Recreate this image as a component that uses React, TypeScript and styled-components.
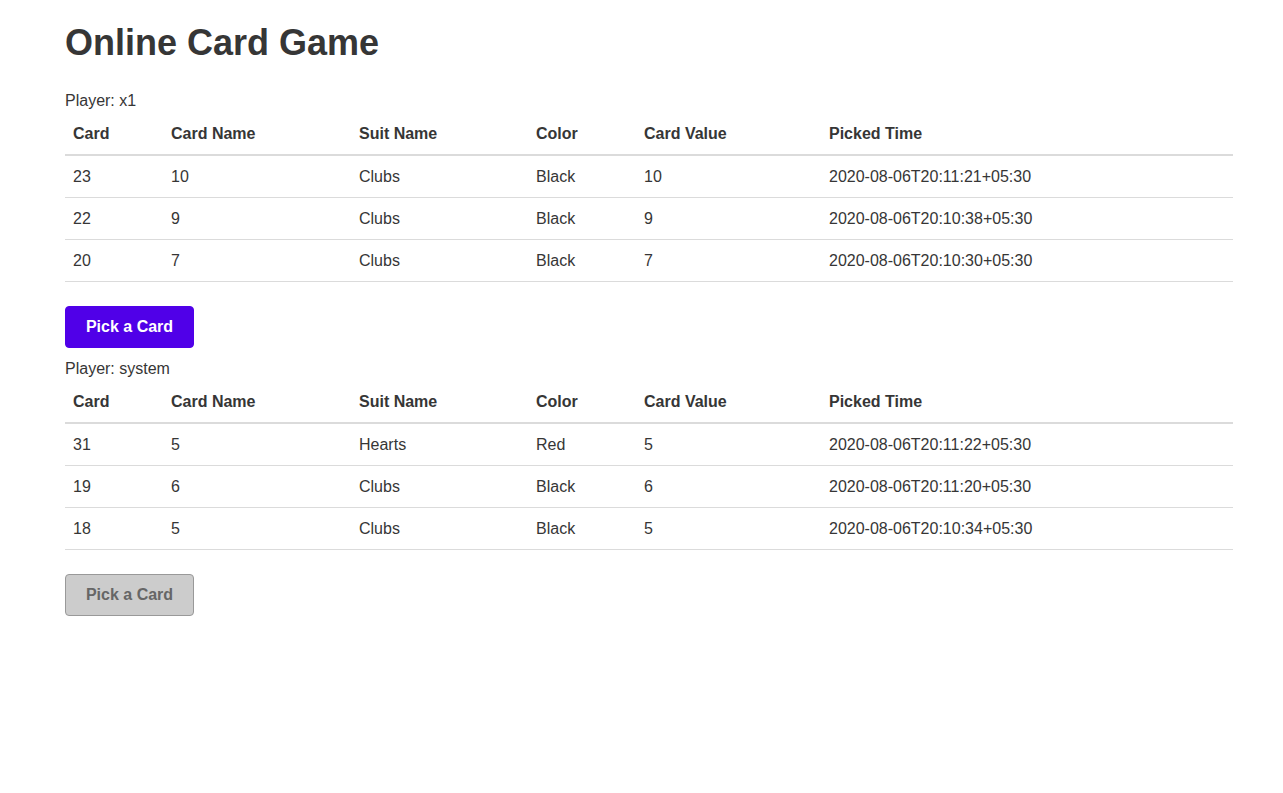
import React from "react";
import styled, { createGlobalStyle } from "styled-components";

const Global = createGlobalStyle`
  html, body { margin: 0; padding: 0; background: #fff; }
  body {
    font-family: "Liberation Sans", Arial, sans-serif;
    font-size: 16px;
    color: #363636;
  }
`;

const Page = styled.main`
  width: 1168px;
  padding: 21px 0 40px 65px;
  display: flex;
  flex-direction: column;
`;

const Title = styled.h1`
  margin: 0 0 25px;
  font-size: 36px;
  line-height: 43px;
  font-weight: 700;
  color: #363636;
`;

const PlayerLabel = styled.div`
  line-height: 24px;
`;

const Table = styled.table`
  width: 100%;
  border-collapse: collapse;
  table-layout: fixed;
`;

const Th = styled.th<{ $w?: number }>`
  ${(p) => (p.$w ? `width: ${p.$w}px;` : "")}
  box-sizing: content-box;
  text-align: left;
  font-weight: 700;
  padding: 8px;
  line-height: 25px;
  border-bottom: 2px solid #dbdbdb;
`;

const Td = styled.td`
  padding: 8px;
  line-height: 25px;
  border-bottom: 1px solid #dbdbdb;
`;

const Button = styled.button<{ $disabled?: boolean }>`
  align-self: flex-start;
  margin: 24px 0 9px;
  width: 129px;
  height: 42px;
  border-radius: 4px;
  font-family: "Liberation Sans", Arial, sans-serif;
  font-size: 16px;
  font-weight: 700;
  cursor: ${(p) => (p.$disabled ? "not-allowed" : "pointer")};
  background: ${(p) => (p.$disabled ? "#cccccc" : "#5000e8")};
  color: ${(p) => (p.$disabled ? "#666666" : "#ffffff")};
  border: 1px solid ${(p) => (p.$disabled ? "#999999" : "#5000e8")};
`;

type Row = [string, string, string, string, string, string];

const cols: { label: string; w?: number }[] = [
  { label: "Card", w: 82 },
  { label: "Card Name", w: 172 },
  { label: "Suit Name", w: 161 },
  { label: "Color", w: 92 },
  { label: "Card Value", w: 169 },
  { label: "Picked Time" },
];

const players: { name: string; rows: Row[]; disabled: boolean }[] = [
  {
    name: "x1",
    disabled: false,
    rows: [
      ["23", "10", "Clubs", "Black", "10", "2020-08-06T20:11:21+05:30"],
      ["22", "9", "Clubs", "Black", "9", "2020-08-06T20:10:38+05:30"],
      ["20", "7", "Clubs", "Black", "7", "2020-08-06T20:10:30+05:30"],
    ],
  },
  {
    name: "system",
    disabled: true,
    rows: [
      ["31", "5", "Hearts", "Red", "5", "2020-08-06T20:11:22+05:30"],
      ["19", "6", "Clubs", "Black", "6", "2020-08-06T20:11:20+05:30"],
      ["18", "5", "Clubs", "Black", "5", "2020-08-06T20:10:34+05:30"],
    ],
  },
];

export default function App() {
  return (
    <>
      <Global />
      <Page>
        <Title>Online Card Game</Title>
        {players.map((p) => (
          <React.Fragment key={p.name}>
            <PlayerLabel>Player: {p.name}</PlayerLabel>
            <Table>
              <thead>
                <tr>
                  {cols.map((c) => (
                    <Th key={c.label} $w={c.w}>
                      {c.label}
                    </Th>
                  ))}
                </tr>
              </thead>
              <tbody>
                {p.rows.map((r, i) => (
                  <tr key={i}>
                    {r.map((v, j) => (
                      <Td key={j}>{v}</Td>
                    ))}
                  </tr>
                ))}
              </tbody>
            </Table>
            <Button $disabled={p.disabled} disabled={p.disabled}>
              Pick a Card
            </Button>
          </React.Fragment>
        ))}
      </Page>
    </>
  );
}
